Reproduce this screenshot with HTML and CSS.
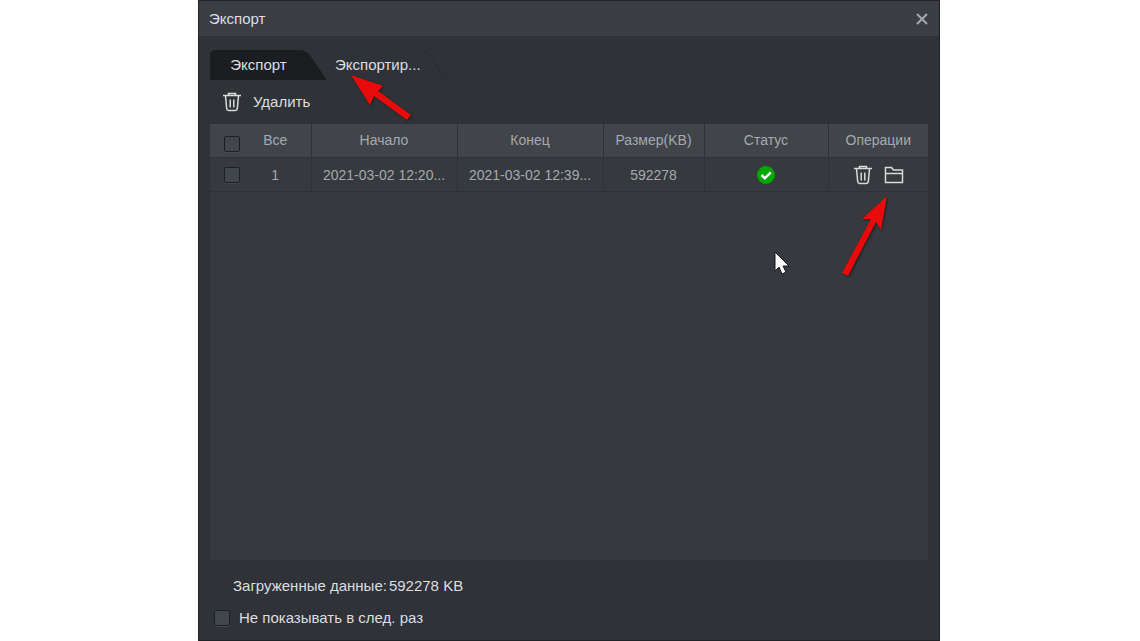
FILE: index.html
```html
<!DOCTYPE html>
<html lang="ru">
  <head>
    <meta charset="UTF-8" />
    <meta name="viewport" content="width=device-width, initial-scale=1.0" />
    <title>Экспорт</title>
    <!-- Stylesheet -->
    <link rel="stylesheet" href="styles.css">
  </head>
  <body>
    <!-- Shared icons -->
    <svg class="sprite" aria-hidden="true">
      <symbol id="trash" viewBox="0 0 20 20">
        <path d="M1 3.500h18M6.500 3V1.500h7V3M3.500 4l1.200 12.700q.2 1.800 2 1.800h6.600q1.800 0 2-1.800L16.500 4M8.200 7.500v8M11.800 7.500v8" />
      </symbol>
      <symbol id="folder" viewBox="0 0 20 20">
        <path d="M1.500 17.500v-15h6l2 2.500h9v12.500zM1.500 8.500h17" />
      </symbol>
    </svg>
    <div class="dialog">
      <header class="titlebar">
        <h1>Экспорт</h1>
        <button class="close" aria-label="Закрыть">
          <svg viewBox="0 0 12 12"><path d="M1 1l10 10M11 1L1 11" /></svg>
        </button>
      </header>
      <main class="content">
        <nav class="tabs">
          <button class="tab tab-dark">Экспорт</button>
          <button class="tab">Экспортир...</button>
          <svg class="tab-edge" viewBox="0 0 24 30"><path d="M1 1q3 0 5 4l16 24" /></svg>
        </nav>
        <div class="toolbar">
          <button class="delete">
            <svg class="icon"><use href="#trash" /></svg>
            Удалить
          </button>
        </div>
        <div class="panel">
          <table>
            <colgroup>
              <col class="col-all" />
              <col class="col-time" />
              <col class="col-time" />
              <col class="col-size" />
              <col class="col-status" />
              <col class="col-actions" />
            </colgroup>
            <thead>
              <tr>
                <th>
                  <label class="pick pick-all"><input type="checkbox" /><span>Все</span></label>
                </th>
                <th>Начало</th>
                <th>Конец</th>
                <th>Размер(KB)</th>
                <th>Статус</th>
                <th>Операции</th>
              </tr>
            </thead>
            <tbody>
              <tr>
                <td>
                  <label class="pick"><input type="checkbox" /><span>1</span></label>
                </td>
                <td>2021-03-02 12:20...</td>
                <td>2021-03-02 12:39...</td>
                <td>592278</td>
                <td>
                  <svg class="status" viewBox="0 0 18 18" role="img" aria-label="Готово">
                    <circle cx="9" cy="9" r="9" />
                    <path d="M4.500 9l3.300 3.300 6-6" />
                  </svg>
                </td>
                <td>
                  <div class="actions">
                    <button aria-label="Удалить"><svg class="icon"><use href="#trash" /></svg></button>
                    <button aria-label="Открыть папку"><svg class="icon"><use href="#folder" /></svg></button>
                  </div>
                </td>
              </tr>
            </tbody>
          </table>
        </div>
      </main>
      <footer>
        <p><span>Загруженные данные:</span><span>592278 KB</span></p>
        <label class="skip"><input type="checkbox" />Не показывать в след. раз</label>
      </footer>
      <!-- Pointers over the dialog -->
      <svg class="arrow arrow-tab" viewBox="0 0 64 48">
        <path d="M3 1l32 11-5 5 33 24-4 5-33-24-4 9z" />
      </svg>
      <svg class="arrow arrow-folder" viewBox="0 0 50 84">
        <path d="M48 1l-6 34-5-8-28 54-6-3 29-54h-9z" />
      </svg>
      <svg class="cursor" viewBox="0 0 16 24">
        <path d="M1 1v19l4-4 3 7 4-2-3-6h6z" />
      </svg>
    </div>
  </body>
</html>
```
FILE: styles.css
```css
* {
  padding: 0;
  margin: 0;
  box-sizing: border-box;
}
body {
  background-color: #ffffff;
  padding: 0 200px 0 198px;
  font-family: "Liberation Sans", Arial, sans-serif;
  font-size: 15px;
  line-height: 20px;
  color: #dcdee0;
}
button {
  font: inherit;
  color: inherit;
  background: none;
  border: none;
  cursor: pointer;
}
svg {
  display: block;
  fill: none;
}
.sprite {
  position: absolute;
  width: 0;
  height: 0;
}
.dialog {
  position: relative;
  display: flex;
  flex-direction: column;
  min-height: 100vh;
  background-color: #2f3236;
  border: 1px solid #202226;
}
.titlebar {
  display: flex;
  justify-content: space-between;
  align-items: center;
  height: 35px;
  padding: 0 11px 0 10px;
  background-color: #3b3e42;
}
h1 {
  font-size: 15px;
  font-weight: 400;
}
.close svg {
  width: 12px;
  height: 12px;
  stroke: #a4a8b0;
  stroke-width: 2;
}
.content {
  flex: 1;
  display: flex;
  flex-direction: column;
  padding: 14px 11px 0;
}
.tabs {
  display: flex;
  height: 30px;
}
.tab {
  padding: 0 2px 0 8px;
}
.tab-dark {
  width: 117px;
  padding: 0 20px 0 0;
  background-color: #1c1d20;
  border-radius: 5px 0 0 0;
  clip-path: polygon(0 0, 92px 0, 98px 3px, 101px 7px, 100% 100%, 0 100%);
}
.tab-edge {
  width: 24px;
  height: 30px;
  stroke: #292b2f;
  stroke-width: 1;
}
.toolbar {
  display: flex;
  align-items: center;
  height: 44px;
  padding-left: 12px;
}
.delete {
  display: flex;
  align-items: center;
  gap: 11px;
}
.icon {
  width: 20px;
  height: 20px;
  stroke: #d8dadc;
  stroke-width: 1.5;
}
.panel {
  flex: 1;
  background-color: #36393d;
}
table {
  width: 100%;
  table-layout: fixed;
  border-collapse: collapse;
  font-size: 14px;
  color: #a5a9b0;
}
.col-all,
.col-size {
  width: 101px;
}
.col-time {
  width: 146px;
}
.col-status {
  width: 124px;
}
.col-actions {
  width: 100px;
}
th,
td {
  height: 34px;
  font-weight: 400;
  text-align: center;
  white-space: nowrap;
  border-right: 1px solid #2d3034;
  border-bottom: 1px solid #2d3034;
}
th {
  height: 33px;
  background-color: #414448;
}
th:last-child {
  border-right: none;
}
td {
  padding-top: 1px;
}
.pick {
  display: flex;
  align-items: center;
  padding-left: 14px;
}
.pick span {
  width: 72px;
}
.pick-all input {
  margin-top: 8px;
}
input[type="checkbox"] {
  appearance: none;
  flex: none;
  width: 16px;
  height: 16px;
  background-color: #41464c;
  border: 1px solid #1d1f22;
  border-radius: 2px;
  box-shadow: 0 1px #45484c;
}
input[type="checkbox"]:checked {
  background-color: #00a800;
}
.status {
  width: 18px;
  height: 18px;
  margin: 0 auto;
}
.status circle {
  fill: #00a800;
}
.status path {
  stroke: #ffffff;
  stroke-width: 2.5;
}
.actions {
  display: flex;
  justify-content: center;
  gap: 11px;
}
footer {
  padding: 16px 15px 12px;
}
footer p {
  display: flex;
  gap: 2px;
  padding-left: 19px;
  margin-bottom: 12px;
}
.skip {
  display: flex;
  align-items: center;
  gap: 9px;
}
.arrow {
  position: absolute;
  fill: #e90b0b;
  filter: drop-shadow(1px 1px 1px #1d1f22);
  pointer-events: none;
}
.arrow-tab {
  top: 73px;
  left: 149px;
  width: 64px;
  height: 48px;
}
.arrow-folder {
  top: 194px;
  right: 50px;
  width: 50px;
  height: 84px;
}
.cursor {
  position: absolute;
  top: 250px;
  right: 149px;
  width: 16px;
  height: 24px;
  fill: #ffffff;
  stroke: #14161e;
  pointer-events: none;
}
```
